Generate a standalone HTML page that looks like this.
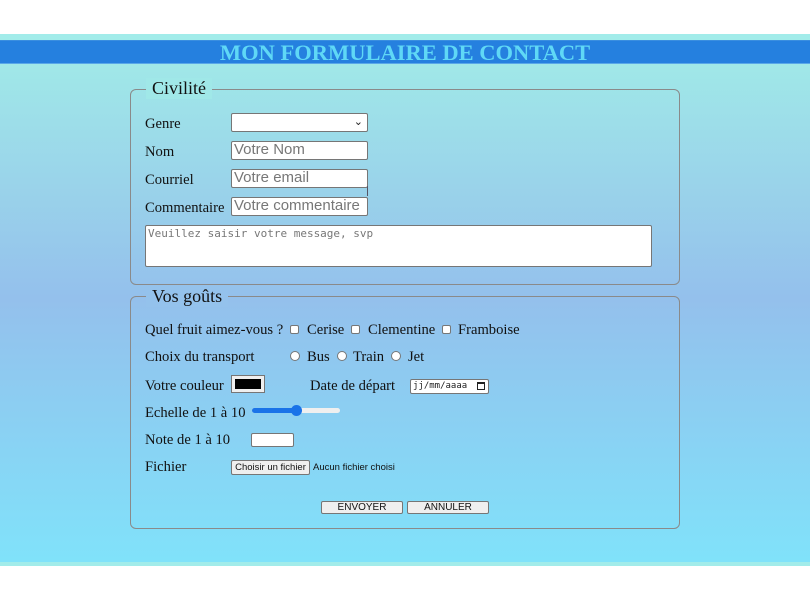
<!DOCTYPE html>
<html><head><meta charset="utf-8"><style>
*{box-sizing:border-box;margin:0;padding:0}
body{width:810px;height:600px;background:#fff;position:relative;font-family:"Liberation Serif",serif;font-size:14.6px;color:#111;overflow:hidden}
.bg{position:absolute;left:0;top:34px;width:810px;height:532px;background:#a2ecea}
.grad{position:absolute;left:0;top:64px;width:810px;height:498px;background:linear-gradient(#a0e8e8 0%,#94c0ec 47%,#80e2fa 100%)}
.bar{position:absolute;left:0;top:40px;width:810px;height:24px;background:#2580df;border-top:1px solid #3a8ee0;border-bottom:1px solid #5aa8e8;color:#5fd8f6;font-weight:bold;font-size:22.5px;text-align:center;line-height:23px}
.fs{position:absolute;border:1px solid #8a8a8a;border-radius:6px}
.lg{position:absolute;font-size:18px;padding:0 6px;background:transparent}
.t{position:absolute;white-space:nowrap}
.in{position:absolute;background:#fff;border:1px solid #767676;border-radius:2px;font-family:"Liberation Sans",sans-serif;font-size:15px;color:#777;padding-left:2px;line-height:16px}
.cb{position:absolute;width:9px;height:9px;border:1px solid #777;background:#fff;border-radius:2px}
.rb{position:absolute;width:10px;height:10px;border:1px solid #777;background:#fff;border-radius:50%}
.btn{position:absolute;background:#efefef;border:1px solid #767676;border-radius:2px;font-family:"Liberation Sans",sans-serif;font-size:10px;text-align:center;color:#111}
</style></head><body>
<div class="bg"></div><div class="grad"></div>
<div class="bar">MON FORMULAIRE DE CONTACT</div>

<div class="fs" style="left:130px;top:89px;width:550px;height:196px"></div>
<div class="lg" style="left:146px;top:78px;background:#a0e8e8">Civilité</div>
<div class="t" style="left:145px;top:116px">Genre</div>
<div class="in" style="left:231px;top:113px;width:137px;height:19px"><span style="position:absolute;right:4px;top:0;color:#222;font-size:11px">⌄</span></div>
<div class="t" style="left:145px;top:144px">Nom</div>
<div class="in" style="left:231px;top:141px;width:137px;height:19px">Votre Nom</div>
<div class="t" style="left:145px;top:172px">Courriel</div>
<div class="in" style="left:231px;top:169px;width:137px;height:19px">Votre email</div>
<div style="position:absolute;left:367px;top:186px;width:1px;height:10px;background:#556"></div>
<div class="t" style="left:145px;top:200px">Commentaire</div>
<div class="in" style="left:231px;top:197px;width:137px;height:19px">Votre commentaire</div>
<div class="in" style="left:145px;top:225px;width:507px;height:42px;font-family:'DejaVu Sans Mono','Liberation Mono',monospace;font-size:11px;color:#777;padding-top:1px;line-height:13px">Veuillez saisir votre message, svp</div>

<div class="fs" style="left:130px;top:296px;width:550px;height:233px"></div>
<div class="lg" style="left:146px;top:286px;background:#94c2ec">Vos goûts</div>
<div class="t" style="left:145px;top:322px">Quel fruit aimez-vous ?</div>
<div class="cb" style="left:290px;top:325px"></div><div class="t" style="left:307px;top:322px">Cerise</div>
<div class="cb" style="left:351px;top:325px"></div><div class="t" style="left:368px;top:322px">Clementine</div>
<div class="cb" style="left:442px;top:325px"></div><div class="t" style="left:458px;top:322px">Framboise</div>
<div class="t" style="left:145px;top:349px">Choix du transport</div>
<div class="rb" style="left:290px;top:351px"></div><div class="t" style="left:307px;top:349px">Bus</div>
<div class="rb" style="left:337px;top:351px"></div><div class="t" style="left:353px;top:349px">Train</div>
<div class="rb" style="left:391px;top:351px"></div><div class="t" style="left:408px;top:349px">Jet</div>
<div class="t" style="left:145px;top:378px">Votre couleur</div>
<div style="position:absolute;left:231px;top:375px;width:34px;height:18px;border:1px solid #767676;background:#efefef;padding:3px"><div style="width:100%;height:100%;background:#000"></div></div>
<div class="t" style="left:310px;top:378px">Date de départ</div>
<div class="in" style="left:410px;top:379px;width:79px;height:15px;font-family:'DejaVu Sans Mono',monospace;font-size:9px;color:#222;line-height:13px">jj/mm/aaaa<span style="position:absolute;right:3px;top:2px;width:8px;height:8px;border:1px solid #222;border-top-width:2px"></span></div>
<div class="t" style="left:145px;top:405px">Echelle de 1 à 10</div>
<div style="position:absolute;left:252px;top:408px;width:88px;height:5px;border-radius:3px;background:#efefef"></div>
<div style="position:absolute;left:252px;top:408px;width:44px;height:5px;border-radius:3px;background:#1a73e8"></div>
<div style="position:absolute;left:291px;top:405px;width:11px;height:11px;border-radius:50%;background:#1a73e8"></div>
<div class="t" style="left:145px;top:432px">Note de 1 à 10</div>
<div class="in" style="left:251px;top:433px;width:43px;height:14px"></div>
<div class="t" style="left:145px;top:459px">Fichier</div>
<div class="btn" style="left:231px;top:460px;width:79px;height:15px;line-height:13px;font-size:9.5px">Choisir un fichier</div>
<div class="t" style="left:313px;top:462px;font-family:'Liberation Sans',sans-serif;font-size:9.5px">Aucun fichier choisi</div>
<div class="btn" style="left:321px;top:501px;width:82px;height:13px;line-height:12px">ENVOYER</div>
<div class="btn" style="left:407px;top:501px;width:82px;height:13px;line-height:12px">ANNULER</div>
</body></html>
